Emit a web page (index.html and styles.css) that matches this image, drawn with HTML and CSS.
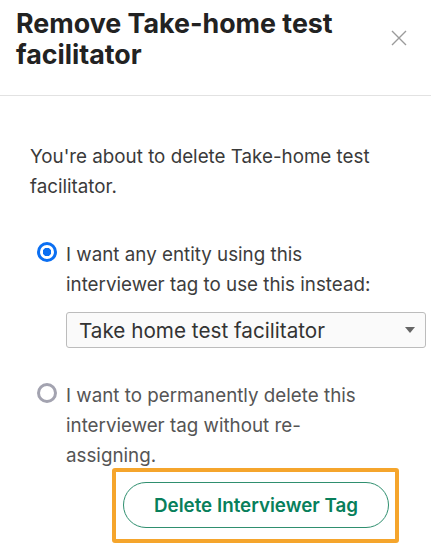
FILE: index.html
```html
<!DOCTYPE html>
<html lang="en">
<head>
  <meta charset="UTF-8">
  <meta name="viewport" content="width=device-width, initial-scale=1.0">
  <title>Remove Take-home test facilitator</title>
  <link rel="stylesheet" href="styles.css">
</head>
<body>

<!-- MODAL HEADER -->
<div class="naglowek">
  <h1>Remove Take-home test facilitator</h1>
  <button class="zamknij" aria-label="Close">
    <svg width="16" height="16" viewBox="0 0 16 16">
      <path d="M1 1 L15 15 M15 1 L1 15" stroke="#9b9b9b" stroke-width="1.4" fill="none"/>
    </svg>
  </button>
</div>

<!-- MODAL BODY -->
<div class="tresc">
  <p class="opis">You're about to delete Take-home test facilitator.</p>

  <label class="opcja">
    <input type="radio" name="tryb" checked>
    <span>I want any entity using this interviewer tag to use this instead:</span>
  </label>

  <div class="wybor">
    <select>
      <option>Take home test facilitator</option>
    </select>
  </div>

  <label class="opcja druga">
    <input type="radio" name="tryb">
    <span>I want to permanently delete this interviewer tag without re-assigning.</span>
  </label>

  <div class="akcje">
    <div class="ramka">
      <button class="usun">Delete Interviewer Tag</button>
    </div>
  </div>
</div>

</body>
</html>
```

FILE: styles.css
```css
* {
  margin: 0;
  padding: 0;
  box-sizing: border-box;
}
body {
  background: white;
  color: #333;
  font-family: Inter, "Liberation Sans", sans-serif;
  overflow: hidden;
}
.naglowek {
  display: flex;
  justify-content: space-between;
  align-items: flex-start;
  padding: 8px 24px 25px 16px;
  border-bottom: 1px solid #e2e2e2;
}
.naglowek h1 {
  font-size: 26.8px;
  line-height: 31px;
  font-weight: 700;
  color: #222;
  max-width: 350px;
}
.zamknij {
  margin-top: 22px;
  background: none;
  border: none;
  cursor: pointer;
  width: 16px;
  height: 16px;
}
.tresc {
  padding: 46px 5px 0 30px;
}
.opis {
  font-size: 18.8px;
  line-height: 30px;
  color: #3a3a3a;
}
.opcja {
  display: flex;
  gap: 9px;
  margin: 38px 0 0 7px;
  font-size: 18.8px;
  line-height: 30px;
  color: #3d3d3d;
  cursor: pointer;
}
.opcja span {
  max-width: 312px;
}
.opcja.druga {
  margin-top: 33px;
  color: #555;
}
.opcja input {
  appearance: none;
  flex: none;
  width: 20px;
  height: 20px;
  margin-top: 2px;
  border: 3px solid #a3a3b0;
  border-radius: 50%;
  background: white;
}
.opcja input:checked {
  border: 3px solid #0b6ff2;
  background: radial-gradient(circle, #0b6ff2 0 4px, white 4.5px);
}
.wybor {
  position: relative;
  margin: 12px 0 0 36px;
}
.wybor select {
  appearance: none;
  width: 100%;
  height: 36px;
  padding: 0 30px 0 12px;
  font-family: inherit;
  font-size: 20.7px;
  color: #333;
  background: #fafafa;
  border: 1px solid #bcbcbc;
  border-radius: 3px;
}
/* strzałka selecta */
.wybor::after {
  content: "";
  position: absolute;
  right: 11px;
  top: 15px;
  border-left: 5.5px solid transparent;
  border-right: 5.5px solid transparent;
  border-top: 6px solid #666;
  pointer-events: none;
}
.akcje {
  display: flex;
  margin: -3px 0 0 82px;
}
.ramka {
  border: 4px solid #f5a52c;
  border-radius: 3px;
  padding: 10px 6px 11px 7px;
}
.usun {
  width: 266px;
  height: 46px;
  background: white;
  border: 1px solid #2f8f6f;
  border-radius: 23px;
  font-family: inherit;
  font-size: 18.8px;
  font-weight: 600;
  color: #087f5b;
  cursor: pointer;
}
```
